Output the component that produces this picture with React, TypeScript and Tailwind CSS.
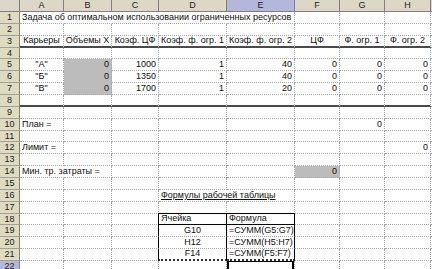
import clsx from "clsx";

type Cell = {
  v: string;
  align?: "l" | "c" | "r";
  fill?: boolean;
  underline?: boolean;
};

const COLS = ["A", "B", "C", "D", "E", "F", "G", "H"];
const ROWS = Array.from({ length: 22 }, (_, i) => i + 1);

const cells: Record<string, Cell> = {
  A1: { v: "Задача об оптимальном использовании ограниченных ресурсов" },
  A3: { v: "Карьеры", align: "c" },
  B3: { v: "Объемы X", align: "c" },
  C3: { v: "Коэф. ЦФ", align: "c" },
  D3: { v: "Коэф. ф. огр. 1", align: "c" },
  E3: { v: "Коэф. ф. огр. 2", align: "c" },
  F3: { v: "ЦФ", align: "c" },
  G3: { v: "Ф. огр. 1", align: "c" },
  H3: { v: "Ф. огр. 2", align: "c" },
  A5: { v: '"А"', align: "c" },
  A6: { v: '"Б"', align: "c" },
  A7: { v: '"В"', align: "c" },
  B5: { v: "0", align: "r", fill: true },
  B6: { v: "0", align: "r", fill: true },
  B7: { v: "0", align: "r", fill: true },
  C5: { v: "1000", align: "r" },
  C6: { v: "1350", align: "r" },
  C7: { v: "1700", align: "r" },
  D5: { v: "1", align: "r" },
  D6: { v: "1", align: "r" },
  D7: { v: "1", align: "r" },
  E5: { v: "40", align: "r" },
  E6: { v: "40", align: "r" },
  E7: { v: "20", align: "r" },
  F5: { v: "0", align: "r" },
  F6: { v: "0", align: "r" },
  F7: { v: "0", align: "r" },
  G5: { v: "0", align: "r" },
  G6: { v: "0", align: "r" },
  G7: { v: "0", align: "r" },
  H5: { v: "0", align: "r" },
  H6: { v: "0", align: "r" },
  H7: { v: "0", align: "r" },
  A10: { v: "План =" },
  G10: { v: "0", align: "r" },
  A12: { v: "Лимит =" },
  H12: { v: "0", align: "r" },
  A14: { v: "Мин. тр. затраты =" },
  F14: { v: "0", align: "r", fill: true },
  D16: { v: "Формулы рабочей таблицы", underline: true },
  D18: { v: "Ячейка" },
  E18: { v: "Формула" },
  D19: { v: "G10", align: "c" },
  E19: { v: "=СУММ(G5:G7)" },
  D20: { v: "H12", align: "c" },
  E20: { v: "=СУММ(H5:H7)" },
  D21: { v: "F14", align: "c" },
  E21: { v: "=СУММ(F5:F7)" },
};

// cells whose text runs on into the next column: no gridline on their right
const spill = new Set(["A1", "B1", "C1", "D1", "A14", "D16"]);

function SheetCell({ col, row }: { col: string; row: number }) {
  const id = col + row;
  const c = cells[id];
  const fillBelow = c?.fill && cells[col + (row + 1)]?.fill;
  const inTable = (col === "D" || col === "E") && row >= 18 && row <= 21;

  return (
    <div
      className={clsx(
        "flex items-end whitespace-nowrap px-[2px] pb-[1px] leading-[10px] text-[#111] border-b border-r [border-style:dotted] border-[#a9a9a9]",
        c?.align === "r" && "justify-end",
        c?.align === "c" && "justify-center",
        c?.fill && "bg-[#bcbcbc]",
        fillBelow && "border-b-transparent",
        spill.has(id) && "border-r-transparent",
        (row === 3 || row === 8) && "border-b-2 [border-bottom-style:solid] border-b-[#4a4a4a]",
        inTable && "border-r-black [border-right-style:solid]",
        inTable && col === "D" && "border-l border-l-black [border-left-style:solid] -ml-px",
        row === 18 && inTable && "border-t border-t-black [border-top-style:solid] -mt-px border-b-black [border-bottom-style:solid]",
        row === 21 && inTable && "border-b-2 border-b-[#333] [border-bottom-style:dotted]",
        id === "E22" && "shadow-[inset_2px_0_0_#000,inset_-2px_0_0_#000,inset_0_1px_0_#000]"
      )}
    >
      {c && <span className={clsx(c.underline && "underline underline-offset-1")}>{c.v}</span>}
    </div>
  );
}

export default function App() {
  return (
    <div className="h-[269px] w-[432px] overflow-hidden bg-white font-['Liberation_Sans',Arial,sans-serif] text-[9px]">
      <div className="grid grid-cols-[20px_44px_48px_47px_68px_68px_45px_45px_46px_1fr] grid-rows-[12px_repeat(22,11.86px)]">
        <div className="border-b border-r border-[#808080] bg-[#dcd7c6]" />
        {COLS.map((col) => (
          <div
            key={col}
            className={clsx(
              "flex items-center justify-center border-b border-r border-[#808080] leading-none text-[#222]",
              col === "E" ? "bg-[#b3b7d9]" : "bg-[#dcd7c6]"
            )}
          >
            {col}
          </div>
        ))}
        <div className="border-b border-[#808080] bg-[#dcd7c6]" />

        {ROWS.map((row) => (
          <div key={row} className="contents">
            <div
              className={clsx(
                "flex items-center justify-center border-b border-r border-b-[#a0a0a0] border-r-[#808080] leading-none text-[#222]",
                row === 22 ? "bg-[#b3b7d9]" : "bg-[#dfdbc0]"
              )}
            >
              {row}
            </div>
            {COLS.map((col) => (
              <SheetCell key={col + row} col={col} row={row} />
            ))}
            <div className="border-b [border-style:dotted] border-[#a9a9a9]" />
          </div>
        ))}
      </div>
    </div>
  );
}
